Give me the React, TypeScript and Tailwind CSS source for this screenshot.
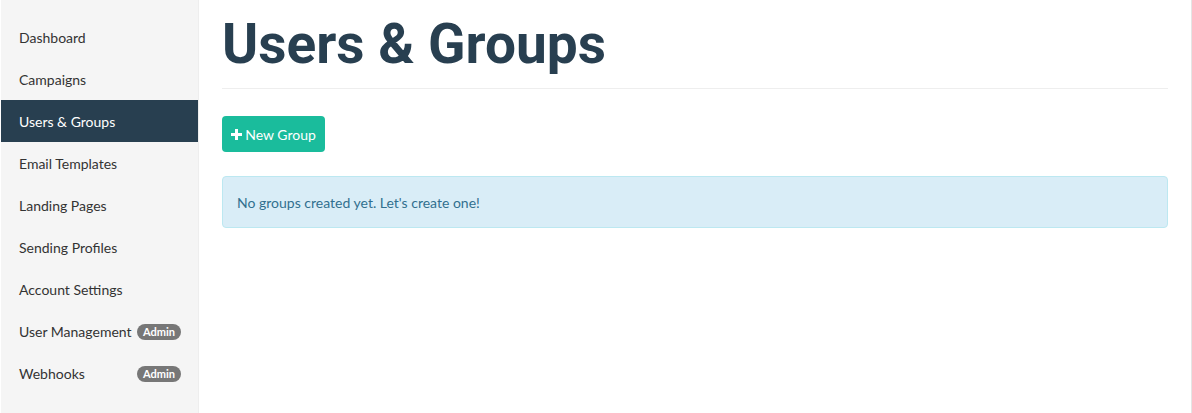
import React from "react";

const items = [
  { label: "Dashboard" },
  { label: "Campaigns" },
  { label: "Users & Groups", active: true },
  { label: "Email Templates" },
  { label: "Landing Pages" },
  { label: "Sending Profiles" },
  { label: "Account Settings" },
  { label: "User Management", admin: true },
  { label: "Webhooks", admin: true },
];

export default function App() {
  return (
    <div
      className="flex w-[1192px] h-[413px] bg-white overflow-hidden"
      style={{ fontFamily: "Lato, 'Liberation Sans', sans-serif" }}
    >
      <aside className="w-[199px] shrink-0 h-full bg-[#f5f5f5] border-r border-[#eeeeee] border-l border-l-white pt-4">
        {items.map((it) => (
          <div
            key={it.label}
            className={`h-[42px] flex items-center justify-between pl-[18px] pr-[17px] pt-[1px] text-[14px] ${
              it.active ? "bg-[#283f50] text-white" : "text-[#333333]"
            }`}
          >
            <span>{it.label}</span>
            {it.admin && (
              <span className="bg-[#777777] text-white text-[11px] font-bold rounded-[10px] px-[6px] h-[16px] leading-[16px]">
                Admin
              </span>
            )}
          </div>
        ))}
      </aside>
      <main className="flex-1 pl-[23px] pr-[23px] border-r border-[#e5e5e5]">
        <h1
          className="text-[55px] font-bold text-[#283f50] leading-none pt-[17px] pb-[16px] border-b border-[#eeeeee]"
          style={{ fontFamily: "Roboto, sans-serif" }}
        >
          Users &amp; Groups
        </h1>
        <button className="mt-[27px] h-[36px] w-[103px] bg-[#1abc9c] rounded-[4px] text-white text-[14px] flex items-center justify-center gap-[3px]">
          <svg width="11" height="11" viewBox="0 0 11 11">
            <path d="M4 0h3v4h4v3H7v4H4V7H0V4h4z" fill="white" />
          </svg>
          New Group
        </button>
        <div className="mt-[24px] h-[52px] bg-[#d9edf7] border border-[#bce8f1] rounded-[4px] text-[#31708f] text-[14px] flex items-center pl-[14px]">
          No groups created yet. Let's create one!
        </div>
      </main>
    </div>
  );
}
